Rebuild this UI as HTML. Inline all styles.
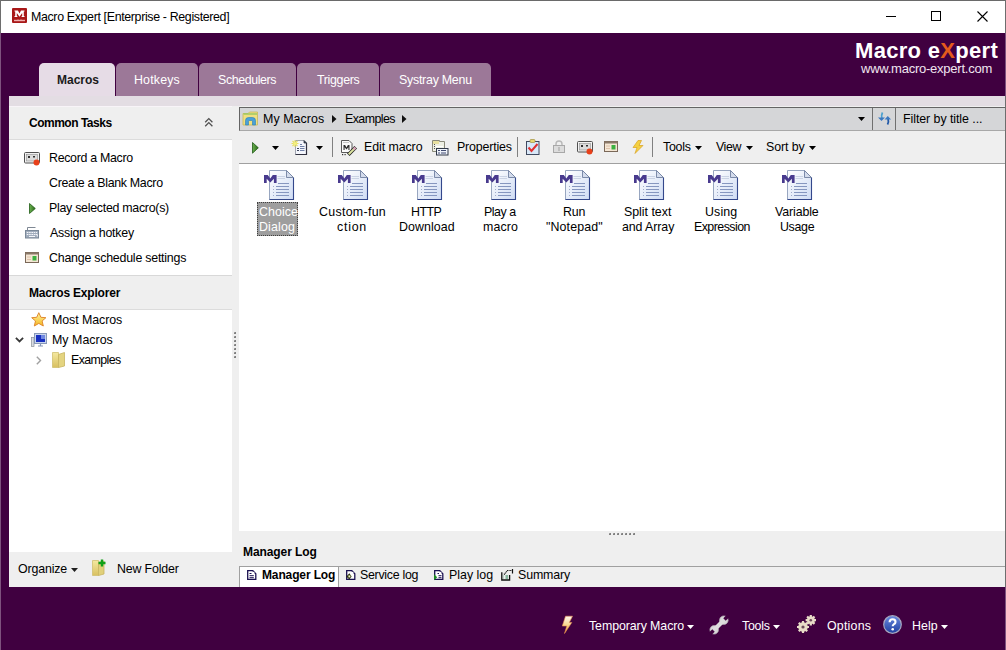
<!DOCTYPE html>
<html><head><meta charset="utf-8">
<style>
*{margin:0;padding:0;box-sizing:border-box}
html,body{width:1006px;height:650px;overflow:hidden;background:#400040;font-family:"Liberation Sans",sans-serif;color:#000}
.a{position:absolute}
.t{position:absolute;white-space:nowrap;font-size:11.7px;line-height:12px}
.b{font-weight:700}
.w{color:#fff}
svg{position:absolute;overflow:visible}
</style></head><body>
<svg width="0" height="0" style="left:0;top:0"><defs>
<linearGradient id="pg" x1="0" y1="0" x2="1" y2="1"><stop offset="0" stop-color="#ffffff"/><stop offset="1" stop-color="#cfdcf4"/></linearGradient>
<linearGradient id="fo" x1="0" y1="0" x2="0" y2="1"><stop offset="0" stop-color="#f4e8a0"/><stop offset="1" stop-color="#d8c060"/></linearGradient>
<linearGradient id="st" x1="0" y1="0" x2="0" y2="1"><stop offset="0" stop-color="#fff4a0"/><stop offset="1" stop-color="#f4b820"/></linearGradient>
<linearGradient id="gp" x1="0" y1="0" x2="1" y2="0"><stop offset="0" stop-color="#6ab050"/><stop offset="1" stop-color="#2a6a18"/></linearGradient>
<linearGradient id="bt" x1="0" y1="0" x2="0" y2="1"><stop offset="0" stop-color="#fff8f0"/><stop offset="0.5" stop-color="#f8d890"/><stop offset="1" stop-color="#f09030"/></linearGradient>
<linearGradient id="hp" x1="0" y1="0" x2="0" y2="1"><stop offset="0" stop-color="#6a8ae0"/><stop offset="1" stop-color="#2040a0"/></linearGradient>
<symbol id="doc" viewBox="0 0 33 33">
<path d="M6.5 2.5H23.5L30.5 9.5V31.5H6.5Z" fill="url(#pg)" stroke="#98a6c0"/>
<path d="M30.5 9.5V31.5H6.5" fill="none" stroke="#34488c" stroke-width="1.1"/>
<path d="M23.5 2.5V9.5H30.5Z" fill="#d4dcec" stroke="#7080a0" stroke-width="0.9"/>
<path d="M14.5 8.5H22M14.5 10.5H22" stroke="#c0cade" stroke-width="0.8"/>
<path d="M15 15.5H26M13 18.5H26M13 21.5H26M13 24.5H26M13 27.5H26" stroke="#7a8cb8" stroke-width="0.9"/>
<path d="M10 18.5H11M10 21.5H11M10 24.5H11M10 27.5H11" stroke="#98a4c4" stroke-width="0.9"/>
<path d="M1 15V7H4.8L7.3 10.6L9.8 7H13.6V15H10.9V10.8L7.3 14.4L3.7 10.8V15Z" fill="#483a8e"/>
</symbol>
<symbol id="rec" viewBox="0 0 16 14">
<rect x="0.5" y="0.5" width="15" height="10.5" rx="1" fill="#f2f2f2" stroke="#505050"/>
<rect x="2.5" y="2.5" width="11" height="6.5" fill="#dcdcdc" stroke="#909090" stroke-width="0.6"/>
<rect x="4" y="4" width="2" height="2" fill="#303030"/><rect x="9" y="4" width="2" height="1.5" fill="#303030"/>
<circle cx="12.5" cy="10.5" r="3" fill="#e8401a"/>
</symbol>
<symbol id="sch" viewBox="0 0 14 11">
<rect x="0.5" y="0.5" width="13" height="10" fill="#f4e6d4" stroke="#7a6858"/>
<rect x="0.5" y="0.5" width="13" height="2" fill="#8a7868"/>
<rect x="7.5" y="4" width="4" height="4.5" fill="#3cb040"/>
<path d="M2 5H6M2 7.5H6" stroke="#d8b8a0" stroke-width="0.8"/>
</symbol>
<symbol id="bolt" viewBox="0 0 12 14">
<path d="M6 0.5L1 7.5H5L3 13.5L11 5.5H7L9.5 0.5Z" fill="#f4d040" stroke="#d8a020" stroke-width="0.7"/>
</symbol>
</defs></svg>

<div class="a" style="left:0;top:0;width:1006px;height:33px;background:#fff;border-top:1px solid #6a6a6a"></div>
<div class="a" style="left:0;top:0;width:1px;height:33px;background:#6e6e6e"></div>
<div class="a" style="left:1005px;top:0;width:1px;height:650px;background:#6e6e6e"></div>
<div class="a" style="left:1005px;top:33px;width:1px;height:63px;background:#7e527e"></div>
<div class="a" style="left:1005px;top:587px;width:1px;height:63px;background:#7e527e"></div>
<div class="a" style="left:0;top:33px;width:1px;height:617px;background:#7e527e"></div>
<svg style="left:12px;top:8px" width="15" height="15"><rect x="0" y="0" width="15" height="15" rx="1" fill="#a81818"/>
<path d="M2.5 2.5H6L7.5 5.5L9 2.5H12.5V3.5H11.8V8H12.5V9H9.6V8H10.2V5L7.5 8.8L4.8 5V8H5.4V9H2.5V8H3.2V3.5H2.5Z" fill="#fff"/><path d="M2 12.5H13" stroke="#f0b0b0" stroke-width="1.4"/><path d="M6 11.5V12M9 11.5V12" stroke="#f0b0b0" stroke-width="1"/></svg>
<div class="t" style="left:31px;top:11px;font-size:12.4px;font-weight:400;letter-spacing:-0.346px;color:#000">Macro Expert [Enterprise - Registered]</div>
<div class="a" style="left:886px;top:16px;width:10px;height:1px;background:#000"></div>
<div class="a" style="left:931px;top:11px;width:10px;height:10px;border:1px solid #000"></div>
<svg style="left:977px;top:11px" width="11" height="11"><path d="M0.5 0.5L10.5 10.5M10.5 0.5L0.5 10.5" stroke="#000" stroke-width="1.1"/></svg>
<div class="t" style="left:855px;top:45px;font-size:22px;font-weight:700;letter-spacing:0.309px;color:#fff">Macro e<span style="color:#e45a1c">X</span>pert</div>
<div class="t" style="left:861px;top:63px;font-size:13px;font-weight:400;letter-spacing:-0.242px;color:#f0e6f0">www.macro-expert.com</div>
<div class="a" style="left:39px;top:63px;width:76px;height:33px;background:#e6dce6;border-radius:5px 5px 0 0"></div>
<div class="t" style="left:57px;top:74px;font-size:12px;font-weight:700;letter-spacing:0.0px;color:#1a1a1a">Macros</div>
<div class="a" style="left:116px;top:63px;width:82px;height:33px;background:#9c7898;border-radius:5px 5px 0 0"></div>
<div class="t" style="left:134px;top:74px;font-size:12.4px;font-weight:400;letter-spacing:0.167px;color:#fff">Hotkeys</div>
<div class="a" style="left:199px;top:63px;width:97px;height:33px;background:#9c7898;border-radius:5px 5px 0 0"></div>
<div class="t" style="left:218px;top:74px;font-size:12.4px;font-weight:400;letter-spacing:-0.389px;color:#fff">Schedulers</div>
<div class="a" style="left:297px;top:63px;width:82px;height:33px;background:#9c7898;border-radius:5px 5px 0 0"></div>
<div class="t" style="left:317px;top:74px;font-size:12.4px;font-weight:400;letter-spacing:-0.314px;color:#fff">Triggers</div>
<div class="a" style="left:380px;top:63px;width:111px;height:33px;background:#9c7898;border-radius:5px 5px 0 0"></div>
<div class="t" style="left:399px;top:74px;font-size:12.4px;font-weight:400;letter-spacing:-0.245px;color:#fff">Systray Menu</div>
<div class="a" style="left:9px;top:96px;width:996px;height:491px;background:#efefef"></div>
<div class="a" style="left:9px;top:96px;width:996px;height:10px;background:#e3dde3"></div>
<div class="a" style="left:9px;top:106px;width:223px;height:1px;background:#f8f4f8"></div>
<div class="a" style="left:9px;top:139px;width:223px;height:1px;background:#dcdcdc"></div>
<div class="a" style="left:9px;top:140px;width:223px;height:135px;background:#fff"></div>
<div class="a" style="left:9px;top:275px;width:223px;height:1px;background:#d8d8d8"></div>
<div class="a" style="left:9px;top:309px;width:223px;height:1px;background:#dcdcdc"></div>
<div class="a" style="left:9px;top:310px;width:223px;height:242px;background:#fff"></div>
<div class="t" style="left:29px;top:117px;font-size:12px;font-weight:700;letter-spacing:-0.491px;color:#000">Common Tasks</div>
<svg style="left:204px;top:117px" width="10" height="10"><path d="M1.2 5.2L4.8 1.6L8.4 5.2M1.2 9.2L4.8 5.6L8.4 9.2" fill="none" stroke="#505050" stroke-width="1.3"/></svg>
<svg style="left:24px;top:152px" width="16" height="14"><use href="#rec"/></svg>
<div class="t" style="left:49px;top:152px;font-size:12.4px;font-weight:400;letter-spacing:-0.308px;color:#000">Record a Macro</div>
<div class="t" style="left:49px;top:177px;font-size:12.4px;font-weight:400;letter-spacing:-0.305px;color:#000">Create a Blank Macro</div>
<svg style="left:29px;top:203px" width="7" height="11"><path d="M0.5 0.5L6.3 5.5L0.5 10.5Z" fill="url(#gp)" stroke="#1e5a14" stroke-width="0.8"/></svg>
<div class="t" style="left:49px;top:202px;font-size:12.4px;font-weight:400;letter-spacing:-0.276px;color:#000">Play selected macro(s)</div>
<svg style="left:25px;top:226px" width="15" height="13"><path d="M2.5 4V1.5H10.5" fill="none" stroke="#707a88" stroke-width="0.9"/>
<rect x="0.5" y="4.5" width="13" height="7.5" fill="#a0acbc" stroke="#7a8898"/>
<path d="M1.8 6.5H12.2M1.8 8.5H10" stroke="#f4f6fa" stroke-width="1" stroke-dasharray="1.6 0.7"/><path d="M4 10.5H10" stroke="#f4f6fa" stroke-width="1"/><path d="M10.5 8.5H12.3V10.5" fill="none" stroke="#f4f6fa"/></svg>
<div class="t" style="left:50px;top:227px;font-size:12.4px;font-weight:400;letter-spacing:-0.243px;color:#000">Assign a hotkey</div>
<svg style="left:25px;top:252px" width="14" height="11"><use href="#sch"/></svg>
<div class="t" style="left:49px;top:252px;font-size:12.4px;font-weight:400;letter-spacing:-0.226px;color:#000">Change schedule settings</div>
<div class="t" style="left:29px;top:287px;font-size:12px;font-weight:700;letter-spacing:-0.193px;color:#000">Macros Explorer</div>
<svg style="left:31px;top:312px" width="16" height="15"><path d="M7.8 0.7L9.9 5.3L14.9 5.7L11.1 9L12.3 14L7.8 11.4L3.3 14L4.5 9L0.7 5.7L5.7 5.3Z" fill="url(#st)" stroke="#e08a30" stroke-width="1"/></svg>
<div class="t" style="left:52px;top:314px;font-size:12.4px;font-weight:400;letter-spacing:-0.06px;color:#000">Most Macros</div>
<svg style="left:15px;top:337px" width="9" height="6"><path d="M0.9 0.9L4.5 4.5L8.1 0.9" fill="none" stroke="#383838" stroke-width="1.8"/></svg>
<svg style="left:31px;top:333px" width="16" height="15"><rect x="0.5" y="4.5" width="2.5" height="9" fill="#d8dce4" stroke="#8a9098" stroke-width="0.7"/>
<rect x="3.5" y="0.5" width="12" height="10" fill="#c8d4ec" stroke="#8898b8"/><rect x="5" y="2" width="9" height="7" fill="#1830c0"/><rect x="10" y="2" width="4" height="4" fill="#7088e0"/>
<path d="M7 13H12M9.5 10.5V13" stroke="#8898b8" stroke-width="1.2"/></svg>
<div class="t" style="left:52px;top:334px;font-size:12.4px;font-weight:400;letter-spacing:0.025px;color:#000">My Macros</div>
<svg style="left:36px;top:356px" width="6" height="9"><path d="M0.8 0.8L4.5 4.5L0.8 8.2" fill="none" stroke="#a0a0a0" stroke-width="1.4"/></svg>
<svg style="left:52px;top:351px" width="14" height="17"><path d="M0.5 1.5H6.5V16.5H0.5Z" fill="url(#fo)" stroke="#d0c070" stroke-width="0.8"/><path d="M6.5 3.5L12.5 1.5V15L6.5 16.5Z" fill="#e4d480" stroke="#c8b460" stroke-width="0.8"/></svg>
<div class="t" style="left:71px;top:354px;font-size:12.4px;font-weight:400;letter-spacing:-0.614px;color:#000">Examples</div>
<div class="a" style="left:234px;top:332px;width:2px;height:2px;background:#808080;border-radius:1px 0 0 0"></div>
<div class="a" style="left:234px;top:336px;width:2px;height:2px;background:#808080;border-radius:1px 0 0 0"></div>
<div class="a" style="left:234px;top:340px;width:2px;height:2px;background:#808080;border-radius:1px 0 0 0"></div>
<div class="a" style="left:234px;top:344px;width:2px;height:2px;background:#808080;border-radius:1px 0 0 0"></div>
<div class="a" style="left:234px;top:348px;width:2px;height:2px;background:#808080;border-radius:1px 0 0 0"></div>
<div class="a" style="left:234px;top:352px;width:2px;height:2px;background:#808080;border-radius:1px 0 0 0"></div>
<div class="a" style="left:234px;top:356px;width:2px;height:2px;background:#808080;border-radius:1px 0 0 0"></div>
<div class="t" style="left:18px;top:563px;font-size:12.4px;font-weight:400;letter-spacing:-0.157px;color:#000">Organize</div>
<svg style="left:71px;top:568px" width="7" height="4"><path d="M0 0H7L3.5 4Z" fill="#202020"/></svg>
<svg style="left:92px;top:558px" width="14" height="18"><path d="M0.5 2.5H6.5V17.5H0.5Z" fill="url(#fo)" stroke="#d0c070" stroke-width="0.8"/><path d="M6.5 4.5L12 3V16L6.5 17.5Z" fill="#e0d07a" stroke="#c8b460" stroke-width="0.8"/>
<path d="M10 1.5V8.5M6.5 5H13.5" stroke="#10a018" stroke-width="2.4"/></svg>
<div class="t" style="left:117px;top:563px;font-size:12.4px;font-weight:400;letter-spacing:-0.167px;color:#000">New Folder</div>
<div class="a" style="left:239px;top:107px;width:766px;height:24px;background:#d5d6d8;border-top:1px solid #646464;border-left:1px solid #646464;border-bottom:1px solid #a8a8a8"></div>
<svg style="left:242px;top:111px" width="17" height="16"><path d="M1 2.5H6L7.5 1H15.5V14H1Z" fill="#f0e080" stroke="#c8b858" stroke-width="0.8"/><path d="M1.5 3H15" stroke="#98c860" stroke-width="1.4"/>
<path d="M3.5 14V9.5Q3.5 6.5 6.5 6.5H10.5Q13.5 6.5 13.5 9.5V14H10.5V10.5Q10.5 9.5 9.5 9.5H7.5Q6.5 9.5 6.5 10.5V14Z" fill="#4aa0d8" stroke="#2a80b8" stroke-width="0.6"/></svg>
<div class="t" style="left:263px;top:113px;font-size:12.4px;font-weight:400;letter-spacing:0.062px;color:#000">My Macros</div>
<svg style="left:332px;top:115px" width="5" height="8"><path d="M0 0L4.5 4L0 8Z" fill="#101010"/></svg>
<div class="t" style="left:345px;top:113px;font-size:12.4px;font-weight:400;letter-spacing:-0.571px;color:#000">Examples</div>
<svg style="left:402px;top:115px" width="5" height="8"><path d="M0 0L4.5 4L0 8Z" fill="#101010"/></svg>
<svg style="left:858px;top:117px" width="7" height="4"><path d="M0 0H7L3.5 4Z" fill="#000"/></svg>
<div class="a" style="left:872px;top:108px;width:1px;height:22px;background:#707070"></div>
<div class="a" style="left:895px;top:108px;width:1px;height:22px;background:#707070"></div>
<svg style="left:877px;top:111px" width="15" height="15"><path d="M5.5 1.5Q4 4 5 8" fill="none" stroke="#4aa0d0" stroke-width="1.8"/><path d="M1 6.5H8L4.5 10Z" fill="#3a78c0"/>
<path d="M10.5 13.5Q12 11 11 7" fill="none" stroke="#2058a8" stroke-width="1.8"/><path d="M7.5 8.5H14L10.8 5Z" fill="#3a78c0"/></svg>
<div class="t" style="left:903px;top:113px;font-size:12.4px;font-weight:400;letter-spacing:-0.061px;color:#000">Filter by title ...</div>
<div class="a" style="left:239px;top:163px;width:766px;height:1px;background:#a0a0a0"></div>
<svg style="left:252px;top:142px" width="7" height="12"><path d="M0.5 0.5L6.3 5.8L0.5 11.2Z" fill="url(#gp)" stroke="#1e5a14" stroke-width="0.8"/></svg>
<svg style="left:272px;top:146px" width="7" height="4"><path d="M0 0H7L3.5 4Z" fill="#000"/></svg>
<svg style="left:291px;top:139px" width="17" height="17"><path d="M4.5 1.5H13L15.5 4V15.5H4.5Z" fill="#f4f6fc" stroke="#a0a4b0"/><path d="M15.5 4V15.5H4.5" fill="none" stroke="#303040" stroke-width="1.2"/><path d="M13 1.5V4H15.5Z" fill="#303848" stroke="#303848" stroke-width="0.8"/>
<path d="M9 5.5H11M9 7.5H13.5M9 9.5H13.5M9 11.5H13.5" stroke="#7080a8"/><path d="M6 9.5H8M6 11.5H8" stroke="#404860"/>
<g stroke="#e8e050" stroke-width="1.1" opacity="0.9"><path d="M0.5 4.5H7.5M4 1V8M1.5 2L6.5 7M6.5 2L1.5 7"/></g><circle cx="4" cy="4.5" r="1.6" fill="#f4f080"/></svg>
<svg style="left:316px;top:146px" width="7" height="4"><path d="M0 0H7L3.5 4Z" fill="#000"/></svg>
<div class="a" style="left:332px;top:137px;width:1px;height:20px;background:#808080"></div>
<svg style="left:340px;top:139px" width="17" height="17"><path d="M1.5 1.5H9L12 4.5V13.5H1.5Z" fill="#fafafa" stroke="#5a5a5a"/><path d="M3 3.5H9" stroke="#c8c8c8"/>
<path d="M3.5 11V6H5.1L6.5 8.4L7.9 6H9.5V11H8.4V8.2L6.5 10.4L4.6 8.2V11Z" fill="#303030"/><rect x="2" y="15" width="1.2" height="1.2" fill="#303030"/><rect x="4.5" y="15" width="1.2" height="1.2" fill="#303030"/>
<path d="M8.3 15.7L15.7 8.3" stroke="#202020" stroke-width="3.6"/><path d="M8.7 15.3L15.3 8.7" stroke="#dce4a0" stroke-width="2"/><path d="M13.6 10.4L15.4 8.6" stroke="#d8a0b8" stroke-width="2.2"/></svg>
<div class="t" style="left:364px;top:141px;font-size:12.4px;font-weight:400;letter-spacing:-0.078px;color:#000">Edit macro</div>
<svg style="left:431px;top:139px" width="18" height="17"><path d="M1.5 1.5H8.5V2.5H13.5V12.5H1.5Z" fill="#eef0e4" stroke="#8a8a7a"/><rect x="2" y="2" width="6" height="3" fill="#e8e0a0"/>
<path d="M3 5.5H4M3 7.5H4M3 9.5H4" stroke="#505050"/><path d="M5 7.5H12" stroke="#fff"/>
<rect x="5.5" y="9.5" width="11.5" height="6.5" fill="#eef2fa" stroke="#303848"/><path d="M7 11.5H9M10 11.5H15M7 14H9M10 14H15" stroke="#404a70"/></svg>
<div class="t" style="left:457px;top:141px;font-size:12.4px;font-weight:400;letter-spacing:-0.167px;color:#000">Properties</div>
<div class="a" style="left:517px;top:137px;width:1px;height:20px;background:#808080"></div>
<svg style="left:526px;top:139px" width="14" height="16"><rect x="0.5" y="2.5" width="12.5" height="13" fill="#d8e8f8" stroke="#404a60"/><rect x="4" y="0.5" width="5" height="3" rx="1" fill="#e8d870" stroke="#a09040" stroke-width="0.7"/>
<path d="M2.5 8.5L5.5 12L11.5 5" fill="none" stroke="#e03030" stroke-width="2"/></svg>
<svg style="left:553px;top:140px" width="12" height="13"><path d="M3 6V4Q3 1 6 1Q9 1 9 4V6" fill="none" stroke="#b8b8b8" stroke-width="1.4"/><rect x="0.5" y="5.5" width="11" height="7" fill="#dcdcdc" stroke="#a8a8a8"/><path d="M6 7V11" stroke="#a0a0a0"/></svg>
<svg style="left:577px;top:141px" width="16" height="14"><use href="#rec"/></svg>
<svg style="left:604px;top:141px" width="14" height="11"><use href="#sch"/></svg>
<svg style="left:632px;top:140px" width="12" height="14"><use href="#bolt"/></svg>
<div class="a" style="left:652px;top:137px;width:1px;height:20px;background:#808080"></div>
<div class="t" style="left:663px;top:141px;font-size:12.4px;font-weight:400;letter-spacing:-0.275px;color:#000">Tools</div>
<svg style="left:695px;top:146px" width="7" height="4"><path d="M0 0H7L3.5 4Z" fill="#000"/></svg>
<div class="t" style="left:716px;top:141px;font-size:12.4px;font-weight:400;letter-spacing:-0.433px;color:#000">View</div>
<svg style="left:746px;top:146px" width="7" height="4"><path d="M0 0H7L3.5 4Z" fill="#000"/></svg>
<div class="t" style="left:766px;top:141px;font-size:12.4px;font-weight:400;letter-spacing:-0.083px;color:#000">Sort by</div>
<svg style="left:809px;top:146px" width="7" height="4"><path d="M0 0H7L3.5 4Z" fill="#000"/></svg>
<div class="a" style="left:239px;top:164px;width:766px;height:367px;background:#fff"></div>
<svg style="left:263px;top:168px" width="33" height="33"><use href="#doc"/></svg>
<div class="a" style="left:257px;top:202px;width:41px;height:34px;background:#9e9e9e;outline:1px dotted #404040;outline-offset:-1px"></div>
<div class="t" style="left:259px;top:206px;font-size:12.4px;font-weight:400;letter-spacing:0.06px;color:#fff">Choice</div>
<div class="t" style="left:259px;top:221px;font-size:12.4px;font-weight:400;letter-spacing:0.14px;color:#fff">Dialog</div>
<svg style="left:337px;top:168px" width="33" height="33"><use href="#doc"/></svg>
<div class="t" style="left:319px;top:206px;font-size:12.4px;font-weight:400;letter-spacing:0.3px;color:#000">Custom-fun</div>
<div class="t" style="left:337px;top:221px;font-size:12.4px;font-weight:400;letter-spacing:0.75px;color:#000">ction</div>
<svg style="left:411px;top:168px" width="33" height="33"><use href="#doc"/></svg>
<div class="t" style="left:411px;top:206px;font-size:12.4px;font-weight:400;letter-spacing:-0.533px;color:#000">HTTP</div>
<div class="t" style="left:399px;top:221px;font-size:12.4px;font-weight:400;letter-spacing:0.071px;color:#000">Download</div>
<svg style="left:485px;top:168px" width="33" height="33"><use href="#doc"/></svg>
<div class="t" style="left:484px;top:206px;font-size:12.4px;font-weight:400;letter-spacing:-0.46px;color:#000">Play a</div>
<div class="t" style="left:483px;top:221px;font-size:12.4px;font-weight:400;letter-spacing:0.1px;color:#000">macro</div>
<svg style="left:559px;top:168px" width="33" height="33"><use href="#doc"/></svg>
<div class="t" style="left:563px;top:206px;font-size:12.4px;font-weight:400;letter-spacing:-0.15px;color:#000">Run</div>
<div class="t" style="left:546px;top:221px;font-size:12.4px;font-weight:400;letter-spacing:0.125px;color:#000">"Notepad"</div>
<svg style="left:633px;top:168px" width="33" height="33"><use href="#doc"/></svg>
<div class="t" style="left:624px;top:206px;font-size:12.4px;font-weight:400;letter-spacing:-0.022px;color:#000">Split text</div>
<div class="t" style="left:622px;top:221px;font-size:12.4px;font-weight:400;letter-spacing:-0.088px;color:#000">and Array</div>
<svg style="left:707px;top:168px" width="33" height="33"><use href="#doc"/></svg>
<div class="t" style="left:705px;top:206px;font-size:12.4px;font-weight:400;letter-spacing:0.125px;color:#000">Using</div>
<div class="t" style="left:694px;top:221px;font-size:12.4px;font-weight:400;letter-spacing:-0.544px;color:#000">Expression</div>
<svg style="left:781px;top:168px" width="33" height="33"><use href="#doc"/></svg>
<div class="t" style="left:775px;top:206px;font-size:12.4px;font-weight:400;letter-spacing:-0.114px;color:#000">Variable</div>
<div class="t" style="left:780px;top:221px;font-size:12.4px;font-weight:400;letter-spacing:-0.325px;color:#000">Usage</div>
<div class="a" style="left:609px;top:533px;width:2px;height:2px;background:#808080;border-radius:1px 0 0 0"></div>
<div class="a" style="left:613px;top:533px;width:2px;height:2px;background:#808080;border-radius:1px 0 0 0"></div>
<div class="a" style="left:617px;top:533px;width:2px;height:2px;background:#808080;border-radius:1px 0 0 0"></div>
<div class="a" style="left:621px;top:533px;width:2px;height:2px;background:#808080;border-radius:1px 0 0 0"></div>
<div class="a" style="left:625px;top:533px;width:2px;height:2px;background:#808080;border-radius:1px 0 0 0"></div>
<div class="a" style="left:629px;top:533px;width:2px;height:2px;background:#808080;border-radius:1px 0 0 0"></div>
<div class="a" style="left:633px;top:533px;width:2px;height:2px;background:#808080;border-radius:1px 0 0 0"></div>
<div class="t" style="left:243px;top:546px;font-size:12px;font-weight:700;letter-spacing:-0.08px;color:#000">Manager Log</div>
<div class="a" style="left:239px;top:566px;width:766px;height:1px;background:#a0a0a0"></div>
<div class="a" style="left:239px;top:566px;width:100px;height:21px;background:#fff;border:1px solid #a0a0a0;border-bottom:none"></div>
<svg style="left:247px;top:570px" width="10" height="10"><path d="M0.7 0.7H5.8L8.8 3.7V9.3H0.7Z" fill="#fff" stroke="#1a1050" stroke-width="1.3"/><circle cx="6.6" cy="2.6" r="0.9" fill="#fff"/><path d="M2.5 3.5H4.5M2.5 5.7H6.8M2.5 7.7H6.8" stroke="#1a1050" stroke-width="1"/></svg>
<div class="t" style="left:262px;top:569px;font-size:12px;font-weight:700;letter-spacing:-0.13px;color:#000">Manager Log</div>
<svg style="left:346px;top:570px" width="10" height="10"><path d="M0.7 0.7H5.8L8.8 3.7V9.3H0.7Z" fill="#fff" stroke="#1a1050" stroke-width="1.3"/><circle cx="6.6" cy="2.6" r="0.9" fill="#fff"/><path d="M3.4 3.3L5.6 6.4L3.4 9.5L0.3 6.4Z" fill="#2a3010"/><rect x="2.4" y="5.4" width="2" height="2" fill="#f0f8c0"/></svg>
<div class="t" style="left:360px;top:569px;font-size:12.4px;font-weight:400;letter-spacing:-0.28px;color:#000">Service log</div>
<svg style="left:434px;top:570px" width="10" height="10"><path d="M0.7 0.7H5.8L8.8 3.7V9.3H0.7Z" fill="#fff" stroke="#1a1050" stroke-width="1.3"/><circle cx="6.6" cy="2.6" r="0.9" fill="#fff"/><path d="M3.5 3.5H5M4.5 5.7H7.5M4.5 7.7H7.5" stroke="#1a1050"/><path d="M0 4.2L3.2 7.2L0 10.2Z" fill="#1a8a20"/></svg>
<div class="t" style="left:449px;top:569px;font-size:12.4px;font-weight:400;letter-spacing:0.0px;color:#000">Play log</div>
<svg style="left:501px;top:568px" width="13" height="13"><path d="M0.8 4.2V12H8.6V7" fill="none" stroke="#101010" stroke-width="1.3"/><path d="M2.5 8H3M4.5 8H7M2.5 10H3M4.5 10H7" stroke="#208050"/><path d="M3 6.5L6.5 2.5H11" fill="none" stroke="#101010" stroke-width="1.2" stroke-dasharray="1 0.6"/><path d="M11.5 1V5.5" stroke="#101010" stroke-width="1.2"/></svg>
<div class="t" style="left:518px;top:569px;font-size:12.4px;font-weight:400;letter-spacing:-0.133px;color:#000">Summary</div>
<svg style="left:561px;top:615px" width="13" height="20"><path d="M4.5 1.2H11.5L8.3 7.5H10.8L3.5 18.5L5.8 11H1.3Z" fill="url(#bt)" stroke="#e89050" stroke-width="0.6"/></svg>
<div class="t" style="left:589px;top:620px;font-size:12.4px;font-weight:400;letter-spacing:-0.086px;color:#fff">Temporary Macro</div>
<svg style="left:687px;top:625px" width="7" height="4"><path d="M0 0H7L3.5 4Z" fill="#fff"/></svg>
<svg style="left:709px;top:615px" width="20" height="20"><g fill="#d8d8d8" stroke="#b0a8b0" stroke-width="0.7"><circle cx="14.8" cy="5.2" r="4.3"/><circle cx="5.2" cy="14.8" r="4.3"/></g>
<path d="M5.2 14.8L14.8 5.2" stroke="#dcdcdc" stroke-width="4.2"/><path d="M15.5 4.5L19.5 0.5M4.5 15.5L0.5 19.5" stroke="#400040" stroke-width="3.4"/></svg>
<div class="t" style="left:742px;top:620px;font-size:12.4px;font-weight:400;letter-spacing:-0.25px;color:#fff">Tools</div>
<svg style="left:773px;top:625px" width="7" height="4"><path d="M0 0H7L3.5 4Z" fill="#fff"/></svg>
<svg style="left:797px;top:614px" width="20" height="20"><g fill="#e8dcc8" stroke="#c0b09a" stroke-width="0.6">
<circle cx="6" cy="13" r="4.6"/><circle cx="13.8" cy="6.2" r="3.8"/></g>
<g stroke="#e8dcc8" stroke-width="2.2"><path d="M6 7V19M0 13H12M1.8 8.8L10.2 17.2M10.2 8.8L1.8 17.2"/><path d="M13.8 1V11.4M8.6 6.2H19M10.1 2.5L17.5 9.9M17.5 2.5L10.1 9.9"/></g>
<circle cx="6" cy="13" r="1.6" fill="#6a4a5a"/><circle cx="13.8" cy="6.2" r="1.3" fill="#6a4a5a"/></svg>
<div class="t" style="left:827px;top:620px;font-size:12.4px;font-weight:400;letter-spacing:0.217px;color:#fff">Options</div>
<svg style="left:883px;top:615px" width="19" height="19"><circle cx="9.5" cy="9.5" r="8.8" fill="url(#hp)" stroke="#a8a8c0" stroke-width="1.2"/>
<path d="M6.6 7.2Q6.6 4.3 9.6 4.3Q12.5 4.3 12.5 6.9Q12.5 8.5 10.8 9.3Q9.7 9.9 9.7 11.3" fill="none" stroke="#fff" stroke-width="2.1"/><circle cx="9.7" cy="14.2" r="1.3" fill="#fff"/></svg>
<div class="t" style="left:912px;top:620px;font-size:12.4px;font-weight:400;letter-spacing:0.067px;color:#fff">Help</div>
<svg style="left:941px;top:625px" width="7" height="4"><path d="M0 0H7L3.5 4Z" fill="#fff"/></svg>
</body></html>
